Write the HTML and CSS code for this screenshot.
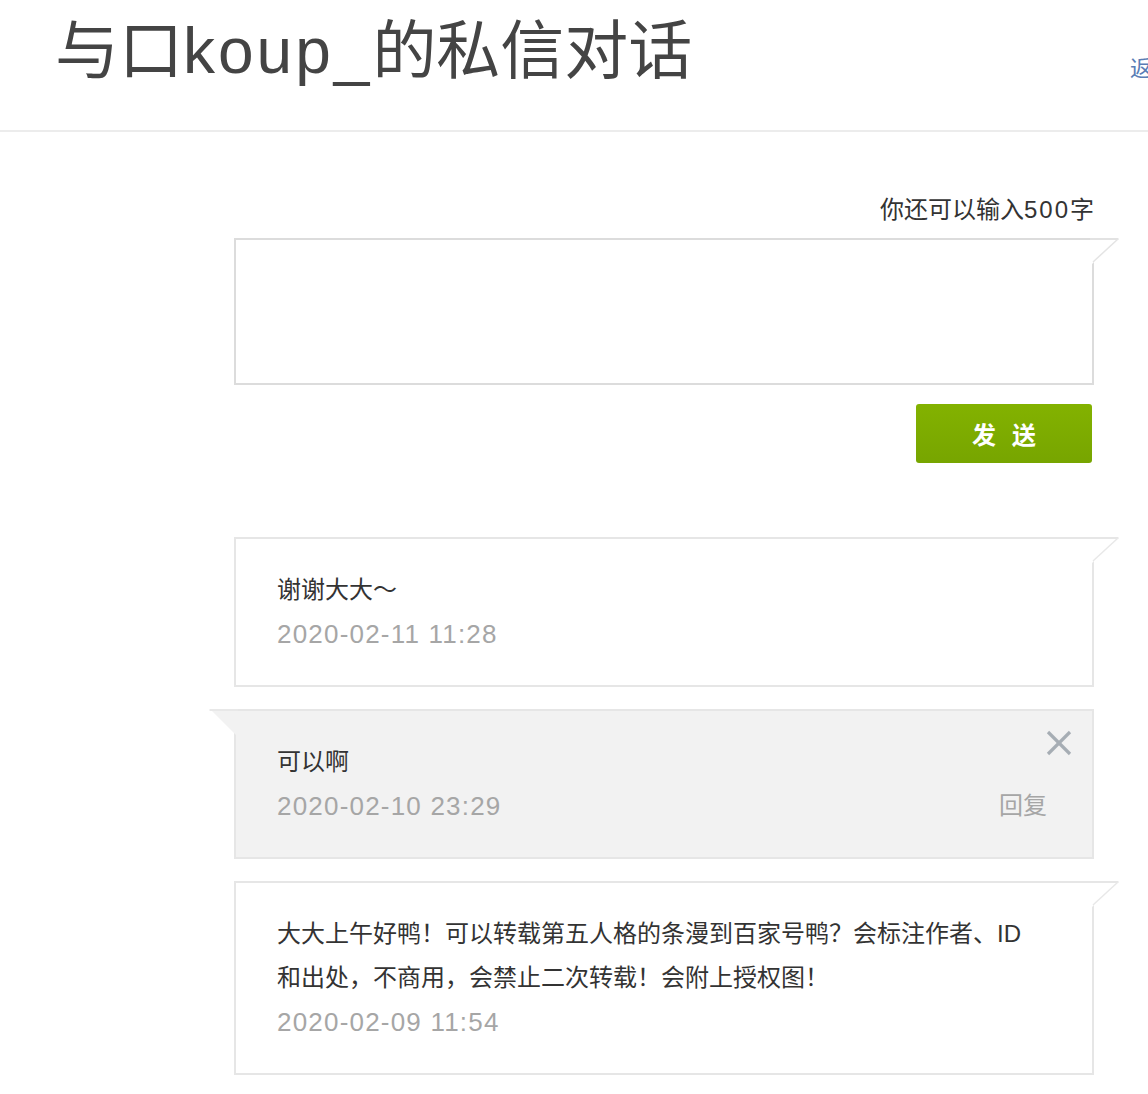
FILE: index.html
```html
<!DOCTYPE html>
<html lang="zh-CN">
<head>
<meta charset="utf-8">
<title>与口koup_的私信对话</title>
<link rel="stylesheet" href="styles.css">
</head>
<body>
<header class="top">
  <h1 class="title">与口<span class="latin">koup_</span>的私信对话</h1>
  <a class="back" href="#">返回私信列表</a>
</header>
<main class="content">
  <div class="counter">你还可以输入<span class="num">500</span>字</div>
  <div class="editor">
    <textarea class="input"></textarea>
    <svg class="tail tail-editor" width="30" height="26" viewBox="0 0 30 26">
      <polygon points="0,0 28,0 2,26 0,26" fill="#fff"/>
      <line x1="0" y1="1" x2="28.5" y2="1" stroke="#e2e2e2" stroke-width="2"/>
      <line x1="28" y1="1" x2="3" y2="24" stroke="#e4e4e4" stroke-width="1.5"/>
    </svg>
  </div>
  <div class="actions">
    <button class="send" type="button"><span>发</span><span>送</span></button>
  </div>
  <ul class="msgs">
    <li class="msg msg-in">
      <div class="text">谢谢大大～</div>
      <div class="meta"><span class="time">2020-02-11 11:28</span></div>
      <svg class="tail tail-r" width="30" height="26" viewBox="0 0 30 26">
        <polygon points="0,0 28,0 2,26 0,26" fill="#fff"/>
        <line x1="0" y1="1" x2="28.5" y2="1" stroke="#e6e6e6" stroke-width="2"/>
        <line x1="28" y1="1" x2="3" y2="24" stroke="#e8e8e8" stroke-width="1.5"/>
      </svg>
    </li>
    <li class="msg msg-out">
      <div class="text">可以啊</div>
      <div class="meta"><span class="time">2020-02-10 23:29</span><a class="reply" href="#">回复</a></div>
      <svg class="tail tail-l" width="30" height="26" viewBox="0 0 30 26">
        <polygon points="2,0 30,0 30,26 28,26" fill="#f2f2f2"/>
        <line x1="1.5" y1="1" x2="30" y2="1" stroke="#e8e8e8" stroke-width="2"/>
      </svg>
      <svg class="close" width="26" height="26" viewBox="0 0 26 26">
        <line x1="2" y1="2" x2="24" y2="24" stroke="#a6adb4" stroke-width="3.2"/>
        <line x1="24" y1="2" x2="2" y2="24" stroke="#a6adb4" stroke-width="3.2"/>
      </svg>
    </li>
    <li class="msg msg-in">
      <div class="text">大大上午好鸭！可以转载第五人格的条漫到百家号鸭？会标注作者、ID<br>和出处，不商用，会禁止二次转载！会附上授权图！</div>
      <div class="meta"><span class="time">2020-02-09 11:54</span></div>
      <svg class="tail tail-r" width="30" height="26" viewBox="0 0 30 26">
        <polygon points="0,0 28,0 2,26 0,26" fill="#fff"/>
        <line x1="0" y1="1" x2="28.5" y2="1" stroke="#e6e6e6" stroke-width="2"/>
        <line x1="28" y1="1" x2="3" y2="24" stroke="#e8e8e8" stroke-width="1.5"/>
      </svg>
    </li>
  </ul>
</main>
</body>
</html>
```

FILE: styles.css
```css
html, body {
  margin: 0;
  padding: 0;
  background: #fff;
}
body {
  font-family: "Liberation Sans", "Noto Sans CJK SC", sans-serif;
  color: #333;
  overflow: hidden;
}
.top {
  display: flex;
  align-items: flex-start;
  width: 1148px;
  height: 132px;
  box-sizing: border-box;
  padding: 18px 0 0 55px;
  border-bottom: 2px solid #ececec;
  overflow: hidden;
}
.title {
  flex: 1 1 auto;
  min-width: 0;
  margin: 0;
  font-size: 64px;
  font-weight: normal;
  line-height: 66px;
  color: #444;
  white-space: nowrap;
}
.latin {
  letter-spacing: 3px;
}
.back {
  flex: 0 0 18px;
  width: 18px;
  min-width: 0;
  margin-top: 40px;
  font-size: 22px;
  line-height: 22px;
  color: #5a7db5;
  text-decoration: none;
  white-space: nowrap;
}
.content {
  width: 860px;
  margin-left: 234px;
}
.counter {
  margin-top: 62px;
  text-align: right;
  font-size: 24px;
  line-height: 32px;
  color: #333;
}
.num {
  letter-spacing: 2px;
}
.editor {
  position: relative;
  margin-top: 12px;
  height: 147px;
}
.input {
  display: block;
  width: 100%;
  height: 147px;
  box-sizing: border-box;
  margin: 0;
  padding: 10px;
  border: 2px solid #dcdcdc;
  resize: none;
  outline: none;
  font: inherit;
  background: #fff;
}
.tail {
  position: absolute;
  top: -2px;
}
.tail-editor {
  top: 0;
  right: -26px;
}
.tail-r {
  right: -28px;
}
.tail-l {
  left: -28px;
}
.actions {
  display: flex;
  justify-content: flex-end;
  margin-top: 19px;
  padding-right: 2px;
}
.send {
  display: flex;
  justify-content: center;
  align-items: center;
  gap: 16px;
  width: 176px;
  height: 59px;
  padding: 0;
  border: 0;
  border-radius: 3px;
  background: linear-gradient(#83b200, #77a500);
  color: #fff;
  font-family: inherit;
  font-size: 24px;
  font-weight: bold;
}
.msgs {
  list-style: none;
  margin: 74px 0 0;
  padding: 0;
  display: flex;
  flex-direction: column;
  gap: 22px;
}
.msg {
  position: relative;
  border: 2px solid #e6e6e6;
  padding: 29px 40px 29px 41px;
  background: #fff;
}
.msg-out {
  background: #f2f2f2;
}
.text {
  font-size: 24px;
  line-height: 44px;
  color: #333;
}
.meta {
  display: flex;
  justify-content: space-between;
  align-items: center;
  line-height: 44px;
}
.time {
  font-size: 26px;
  letter-spacing: 1.2px;
  color: #a6a6a6;
}
.reply {
  margin-right: 5px;
  font-size: 24px;
  color: #a6a6a6;
  text-decoration: none;
}
.close {
  position: absolute;
  top: 19px;
  right: 20px;
}
```
